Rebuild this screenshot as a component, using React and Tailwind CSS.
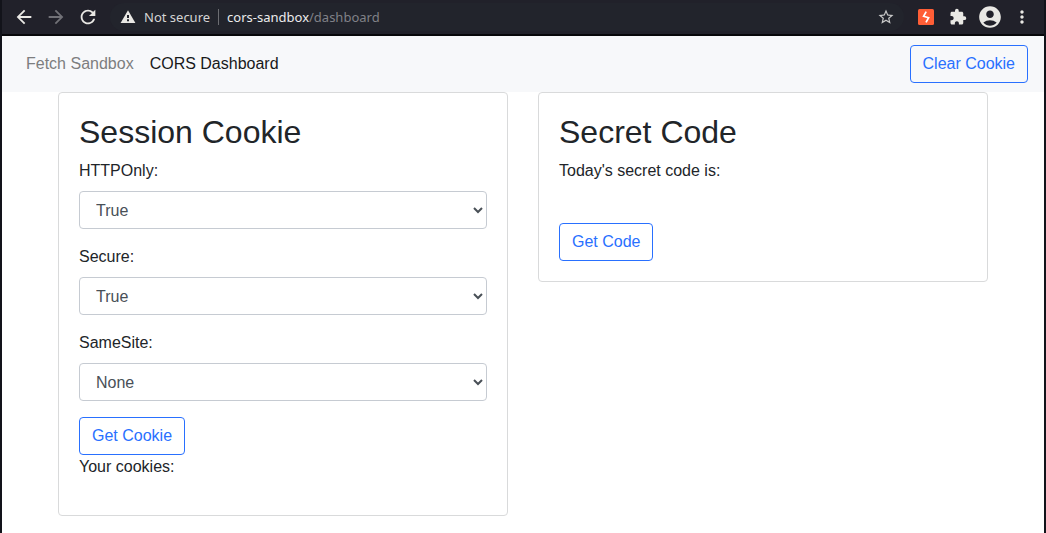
import React from "react";
import {
  MdArrowBack,
  MdArrowForward,
  MdRefresh,
  MdStarBorder,
  MdExtension,
  MdAccountCircle,
  MdMoreVert,
} from "react-icons/md";

function IconButton({ label, children }) {
  return (
    <button
      type="button"
      aria-label={label}
      className="flex h-7 w-8 shrink-0 items-center justify-center text-[#e9e8e4]"
    >
      {children}
    </button>
  );
}

function BoltIcon() {
  return (
    <svg width="16" height="16" viewBox="0 0 16 16" aria-hidden="true">
      <rect width="16" height="16" rx="1.5" fill="#ff5e36" />
      <path
        d="M8.2 2.6 5.6 7.3 10.6 8.7 8 13.4"
        fill="none"
        stroke="#fff"
        strokeWidth="1.7"
        strokeLinejoin="miter"
      />
    </svg>
  );
}

function WarningIcon() {
  return (
    <svg width="16" height="16" viewBox="0 0 16 16" className="shrink-0" aria-hidden="true">
      <path d="M8 1.2 15.4 14H.6z" fill="#e9e8e4" />
      <path d="M7 6h2v3H7zM7 10.2h2v2H7z" fill="#22242c" />
    </svg>
  );
}

function BrowserBar() {
  return (
    <header className="flex h-9 items-center border-b-2 border-[#07070a] bg-[#21212a] px-1.5 font-['Noto_Sans',sans-serif]">
      <IconButton label="Back">
        <MdArrowBack size={22} />
      </IconButton>
      <IconButton label="Forward">
        <MdArrowForward size={22} className="text-[#717177]" />
      </IconButton>
      <IconButton label="Reload">
        <MdRefresh size={22} />
      </IconButton>
      <div className="mx-1.5 flex h-7 min-w-0 flex-1 items-center rounded-full bg-[#22242c] pr-0.5 pl-2.5 text-[13px] leading-5 text-[#d5d5d5]">
        <WarningIcon />
        <span className="ml-2 whitespace-nowrap">Not secure</span>
        <span className="mx-2 h-4 w-px bg-[#6c6d72]" />
        <span className="min-w-0 flex-1 truncate text-[#808187]">
          <span className="text-[#ececec]">cors-sandbox</span>/dashboard
        </span>
        <IconButton label="Bookmark">
          <MdStarBorder size={18} className="text-[#c9c9c9]" />
        </IconButton>
      </div>
      <IconButton label="Proxy extension">
        <BoltIcon />
      </IconButton>
      <IconButton label="Extensions">
        <MdExtension size={18} />
      </IconButton>
      <IconButton label="Profile">
        <MdAccountCircle size={26} />
      </IconButton>
      <IconButton label="Menu">
        <MdMoreVert size={20} />
      </IconButton>
    </header>
  );
}

function OutlineButton({ children }) {
  return (
    <button
      type="button"
      className="rounded border border-[#2970ff] px-3 py-1.5 text-base text-[#2970ff] hover:bg-[#2970ff] hover:text-white"
    >
      {children}
    </button>
  );
}

function Card({ title, children }) {
  return (
    <section className="min-w-0 rounded border border-[#d9dadb] bg-white p-5">
      <h2 className="mb-2 text-[32px] leading-[38px]">{title}</h2>
      {children}
    </section>
  );
}

function SelectField({ id, label, value, options }) {
  return (
    <div className="mb-4">
      <label htmlFor={id} className="mb-2 block">
        {label}
      </label>
      <select
        id={id}
        defaultValue={value}
        className="block h-[38px] w-full rounded border border-[#c6cbd2] bg-white px-3 py-1.5 text-base text-[#495057]"
      >
        {options.map((option) => (
          <option key={option}>{option}</option>
        ))}
      </select>
    </div>
  );
}

export default function App() {
  return (
    <div className="min-h-screen border-x-2 border-[#12131a] bg-white font-['Liberation_Sans',Arial,sans-serif] text-base text-[#212529]">
      <BrowserBar />
      <nav className="flex h-14 items-center justify-between bg-[#f7f8fa] px-4">
        <div className="flex">
          <a href="#sandbox" className="p-2 text-[#7d7e7f]">
            Fetch Sandbox
          </a>
          <a href="#dashboard" className="p-2 text-[#18191a]">
            CORS Dashboard
          </a>
        </div>
        <OutlineButton>Clear Cookie</OutlineButton>
      </nav>
      <main className="mx-auto grid max-w-[960px] grid-cols-2 items-start gap-[30px] px-[15px]">
        <Card title="Session Cookie">
          <SelectField id="httponly" label="HTTPOnly:" value="True" options={["True", "False"]} />
          <SelectField id="secure" label="Secure:" value="True" options={["True", "False"]} />
          <SelectField id="samesite" label="SameSite:" value="None" options={["None", "Lax", "Strict"]} />
          <OutlineButton>Get Cookie</OutlineButton>
          <p className="mb-4">Your cookies:</p>
        </Card>
        <Card title="Secret Code">
          <p className="mb-10">Today's secret code is:</p>
          <OutlineButton>Get Code</OutlineButton>
        </Card>
      </main>
    </div>
  );
}
